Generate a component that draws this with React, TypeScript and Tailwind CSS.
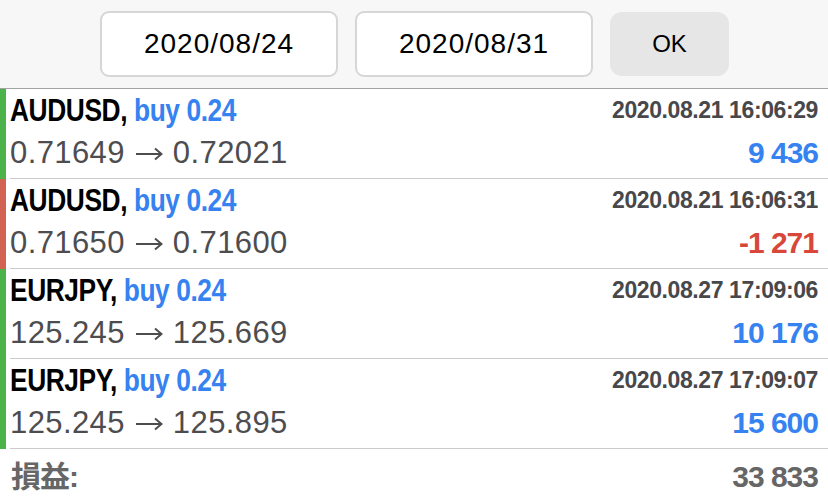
import React from "react";

type Trade = {
  sym: string;
  side: string;
  from: string;
  to: string;
  time: string;
  pl: string;
  up: boolean;
};

const trades: Trade[] = [
  { sym: "AUDUSD,", side: "buy 0.24", from: "0.71649", to: "0.72021", time: "2020.08.21 16:06:29", pl: "9 436", up: true },
  { sym: "AUDUSD,", side: "buy 0.24", from: "0.71650", to: "0.71600", time: "2020.08.21 16:06:31", pl: "-1 271", up: false },
  { sym: "EURJPY,", side: "buy 0.24", from: "125.245", to: "125.669", time: "2020.08.27 17:09:06", pl: "10 176", up: true },
  { sym: "EURJPY,", side: "buy 0.24", from: "125.245", to: "125.895", time: "2020.08.27 17:09:07", pl: "15 600", up: true },
];

const font = { fontFamily: '"Liberation Sans", Arial, "Noto Sans CJK JP", sans-serif' };

function Arrow() {
  return (
    <svg width="28" height="16" viewBox="0 0 28 16" className="mx-[10px] mt-[2px]" fill="none">
      <path d="M1 8 H26" stroke="#4d4d50" strokeWidth="2" />
      <path d="M20 2.5 L26.5 8 L20 13.5" stroke="#4d4d50" strokeWidth="2" strokeLinejoin="miter" />
    </svg>
  );
}

function Row({ t }: { t: Trade }) {
  return (
    <div className="flex h-[90px]">
      <div className={t.up ? "w-[6px] bg-[#4cb24a]" : "w-[6px] bg-[#d26352]"} />
      <div className="ml-[4px] flex flex-1 items-start justify-between border-b border-[#cbcbcb] pr-[10px]">
        <div className="flex flex-col">
          <div className="flex h-[42px] items-center">
            <span className="inline-block origin-left scale-x-[0.85] whitespace-pre pt-[2px] text-[31px] font-bold tracking-[-0.5px]">
              <span className="text-black">{t.sym} </span>
              <span className="text-[#3582f0]">{t.side}</span>
            </span>
          </div>
          <div className="flex h-[42px] items-center whitespace-pre pt-[2px] text-[31px] tracking-[0.4px] text-[#4d4d50]">
            <span>{t.from}</span>
            <Arrow />
            <span>{t.to}</span>
          </div>
        </div>
        <div className="flex flex-col items-end">
          <div className="flex h-[42px] items-center text-[23px] font-bold tracking-[-0.4px] text-[#48484b]">
            {t.time}
          </div>
          <div
            className={
              t.up
                ? "flex h-[42px] items-center whitespace-pre text-[30px] font-bold tracking-[-1px] text-[#3582f0]"
                : "flex h-[42px] items-center whitespace-pre text-[30px] font-bold tracking-[-1px] text-[#d8483a]"
            }
          >
            {t.pl}
          </div>
        </div>
      </div>
    </div>
  );
}

export default function App() {
  return (
    <div className="h-[497px] w-[828px] overflow-hidden bg-white" style={font}>
      <div className="flex h-[89px] items-start justify-center gap-[17px] border-b border-[#a3a3a3] bg-[#f7f7f7] pl-[1px] pt-[11px]">
        <div className="flex h-[66px] w-[238px] items-center justify-center rounded-[9px] border-2 border-[#d6d6d6] bg-white text-[28px] tracking-[1px] text-black">
          2020/08/24
        </div>
        <div className="flex h-[66px] w-[238px] items-center justify-center rounded-[9px] border-2 border-[#d6d6d6] bg-white text-[28px] tracking-[1px] text-black">
          2020/08/31
        </div>
        <div className="mt-[1px] flex h-[64px] w-[119px] items-center justify-center rounded-[12px] bg-[#e6e6e6] text-[24px] text-black">
          OK
        </div>
      </div>
      {trades.map((t, i) => (
        <Row key={i} t={t} />
      ))}
      <div className="flex h-[50px] items-center justify-between pl-[11px] pr-[10px] pt-[4px] text-[30px] font-bold text-[#666666]">
        <span className="tracking-[-1px]">損益:</span>
        <span className="whitespace-pre tracking-[-1px]">33 833</span>
      </div>
    </div>
  );
}
